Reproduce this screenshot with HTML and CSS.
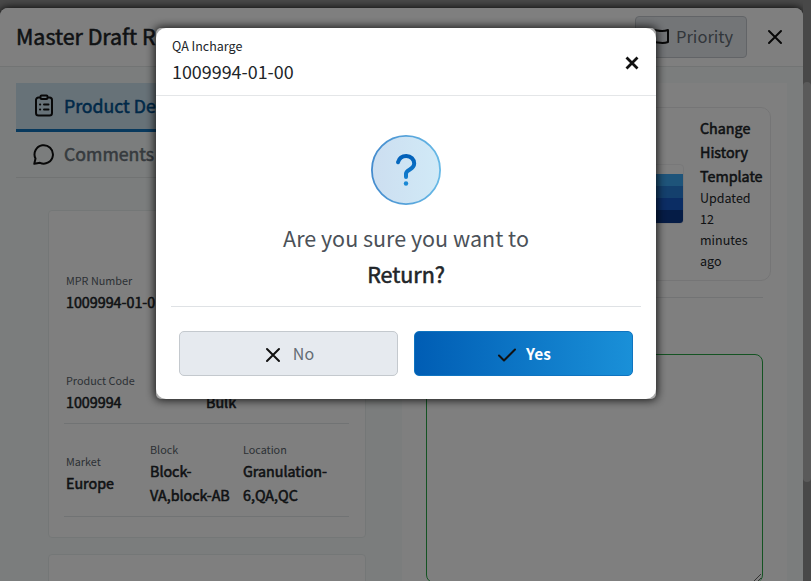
FILE: index.html
```html
<!DOCTYPE html>
<html lang="en">
<head>
<meta charset="utf-8">
<title>Master Draft</title>
<link rel="stylesheet" href="styles.css">
</head>
<body>
<div class="window">
  <header class="window-head">
    <h1 class="title strong">Master Draft R</h1>
    <div class="head-actions">
      <button class="priority"><svg width="20" height="20" viewBox="0 0 20 20"><path d="M2 18V4c4-3 8 2 17-1v12c-8 3-13-2-17 1"/></svg><span>Priority</span></button>
      <svg class="close" width="16" height="16" viewBox="0 0 16 16"><path d="M2 2l12 12M14 2l-12 12"/></svg>
    </div>
  </header>
  <main class="content">
    <section class="left">
      <nav class="tabs">
        <a class="tab active strong"><svg width="22" height="24" viewBox="0 0 22 24"><path d="M7 4.500H5.500a2.500 2.500 0 0 0-2.500 2.500V20a2.500 2.500 0 0 0 2.500 2.500h11a2.500 2.500 0 0 0 2.500-2.500V7a2.500 2.500 0 0 0-2.500-2.500H15M8.500 2.500h5a1 1 0 0 1 1 1v1.500a1 1 0 0 1-1 1h-5a1 1 0 0 1-1-1v-1.500a1 1 0 0 1 1-1zM7 11.500h.2M11 11.500h4.500M7 16.500h.2M11 16.500h4.500"/></svg>Product De</a>
        <a class="tab strong"><svg width="22" height="22" viewBox="0 0 22 22"><path d="M2.500 15.500A9.200 9.200 0 1 1 7 19.800L1.300 20.800z"/></svg>Comments</a>
      </nav>
      <div class="cards">
        <article class="card">
          <div class="row first"><div class="field"><span>MPR Number</span><b class="strong">1009994-01-0</b></div></div>
          <div class="row second"><div class="field wide"><span>Product Code</span><b class="strong">1009994</b></div><div class="field"><span>Type</span><b class="strong">Bulk</b></div></div>
          <div class="row third">
            <div class="field market"><span>Market</span><b class="strong">Europe</b></div>
            <div class="field block"><span>Block</span><b class="strong">Block-<br>VA,block-AB</b></div>
            <div class="field"><span>Location</span><b class="strong">Granulation-<br>6,QA,QC</b></div>
          </div>
        </article>
        <article class="card next"></article>
      </div>
    </section>
    <section class="right">
      <div class="template">
        <div class="thumb"><i></i><i></i><i></i><i></i></div>
        <div class="template-text"><b class="strong">Change<br>History<br>Template</b><span>Updated<br>12<br>minutes<br>ago</span></div>
      </div>
      <hr>
      <textarea></textarea>
    </section>
  </main>
</div>
<div class="scrollbar"><div class="scroll-thumb"></div></div>
<div class="overlay">
  <div class="modal-frame">
    <div class="modal">
      <header class="modal-head">
        <div><div class="role">QA Incharge</div><div class="number">1009994-01-00</div></div>
        <svg class="modal-close" width="14" height="14" viewBox="0 0 14 14"><path d="M1.500 1.500l11 11M12.500 1.500l-11 11"/></svg>
      </header>
      <div class="question">
        <svg class="badge" width="70" height="70" viewBox="0 0 70 70">
          <defs>
            <linearGradient id="fill" x1="0" x2="1"><stop stop-color="#ccdef0"/><stop offset="1" stop-color="#d1eaf7"/></linearGradient>
            <linearGradient id="edge" x1="0" x2="1"><stop stop-color="#458cce"/><stop offset="1" stop-color="#67b9e6"/></linearGradient>
            <linearGradient id="mark" gradientUnits="userSpaceOnUse" x1="0" x2="0" y1="20" y2="50"><stop stop-color="#015fb8"/><stop offset="1" stop-color="#1988d5"/></linearGradient>
          </defs>
          <circle cx="35" cy="35" r="34.100" fill="url(#fill)" stroke="url(#edge)" stroke-width="1.800"/>
          <path d="M27 27.300C28.200 22.900 31.500 21 35.300 21C40 21 43.200 24.400 43.200 28.500C43.200 34.600 35 34.600 35 38.700V42" fill="none" stroke="url(#mark)" stroke-width="4" stroke-linecap="round"/>
          <circle cx="35" cy="48.500" r="2.200" fill="#1988d5" stroke="none"/>
        </svg>
        <p>Are you sure you want to<br><b class="strong">Return?</b></p>
      </div>
      <div class="buttons">
        <button class="no"><svg width="16" height="16" viewBox="0 0 16 16"><path d="M2 2l12 12M14 2l-12 12"/></svg><span>No</span></button>
        <button class="yes"><svg width="20" height="16" viewBox="0 0 20 16"><path d="M2 8.500l5 5L18 2.500"/></svg><span>Yes</span></button>
      </div>
    </div>
  </div>
</div>
</body>
</html>
```

FILE: styles.css
```css
* { box-sizing: border-box; }
html, body { height: 100%; margin: 0; overflow: hidden; }
body {
  display: flex;
  background: #929292;
  color: #212529;
  font-family: "Noto Sans CJK JP", sans-serif;
  font-size: 14.3px;
  line-height: 24px;
}
button { font: inherit; cursor: pointer; }
svg { flex: none; fill: none; stroke: #111; stroke-width: 2; stroke-linecap: round; stroke-linejoin: round; }
.strong { font-weight: 400; -webkit-text-stroke: .55px currentColor; }
.window {
  width: 803px;
  height: 573px;
  margin-top: 8px;
  border-radius: 8px 8px 0 0;
  background: #f7fbfa;
  box-shadow: 0 0 8px #000;
  overflow: hidden;
}
.window-head {
  display: flex;
  align-items: center;
  justify-content: space-between;
  height: 59px;
  padding: 0 20px 0 16px;
  background: #fff;
  border-bottom: 1px solid #e4e8e8;
}
.title { margin: 0; padding-bottom: 2px; font-size: 21.400px; line-height: 32px; white-space: nowrap; }
.head-actions { display: flex; align-items: center; gap: 20px; }
.priority {
  display: flex;
  align-items: center;
  gap: 7px;
  width: 112px;
  height: 42px;
  padding: 0 0 0 13px;
  border: 1px solid #c4c9ce;
  border-radius: 4px;
  background: #e6eaef;
  color: #656d75;
  font-size: 16.500px;
}
.priority span { padding-bottom: 2px; }
.content { display: flex; height: 514px; padding: 16px 16px 0; }
.left { width: 386px; }
.tab {
  display: flex;
  align-items: center;
  gap: 9px;
  height: 49px;
  padding: 0 0 2px 17px;
  border-bottom: 3px solid #1172bb;
  background: #cfe4f1;
  color: #015291;
  font-size: 17.700px;
}
.tab + .tab { height: 46px; padding-bottom: 3px; border-bottom: 1px solid #e2e6e6; background: none; color: #6c757d; }
.tab + .tab svg { margin-top: 2px; }
.cards { padding: 32px 36px 0 32px; }
.card { height: 328px; padding: 59px 16px 0 17px; background: #fff; border: 1px solid #e9efee; border-radius: 4px; }
.card.next { margin-top: 16px; }
.field { display: flex; flex-direction: column; white-space: nowrap; }
.field span { color: #59636b; font-size: 10.800px; line-height: 20px; }
.row { display: flex; margin-left: -2px; padding-left: 2px; }
.first { height: 100px; }
.second { height: 54px; border-bottom: 1px solid #e3e6e8; }
.wide { width: 140px; }
.third { align-items: center; height: 93px; padding-top: 5px; border-bottom: 1px solid #e3e6e8; }
.market { width: 84px; }
.block { width: 93px; }
.right { flex: 1; padding: 24px 16px 0 24px; background: #fff; }
.template {
  display: flex;
  justify-content: flex-end;
  align-items: center;
  gap: 16px;
  height: 174px;
  padding-right: 8px;
  border: 1px solid #eaeaec;
  border-radius: 10px;
}
.thumb { width: 60px; height: 60px; padding-top: 9px; border: 1px solid #f0f1f2; border-radius: 4px; background: #fff; overflow: hidden; }
.thumb i { display: block; height: 12px; background: #3da8f5; }
.thumb i:nth-child(2) { background: #2880db; }
.thumb i:nth-child(3) { background: #175ac9; }
.thumb i:nth-child(4) { height: 13px; background: #0b388d; }
.template-text { display: flex; flex-direction: column; width: 62px; padding-bottom: 2px; white-space: nowrap; }
.template-text span { margin-top: -1px; font-size: 12.500px; line-height: 21px; }
.right hr { width: 337px; height: 1px; margin: 16px 0 56px; border: 0; background: #e5e7e9; }
.right textarea { display: block; width: 337px; height: 229px; border: 1px solid #28a745; border-radius: 8px; background: #fff; }
.scrollbar { flex: 1; padding-top: 82px; background: #909090; }
.scroll-thumb { height: 400px; border-radius: 4px; background: #b4b4b4; }
.overlay { position: fixed; inset: 0; display: flex; justify-content: center; align-items: flex-start; padding: 28px 0 0 1px; background: rgba(0, 0, 0, .5); }
.modal-frame { width: 500px; height: 371px; border-radius: 5px; background: #aaa; box-shadow: 0 0 10px 1px rgba(0, 0, 0, .85); }
.modal { height: 371px; border-radius: 10px; background: #fff; }
.modal-head { display: flex; align-items: flex-start; justify-content: space-between; height: 68px; padding: 7px 17px 0 16px; border-bottom: 1px solid #e4e6e8; }
.role { font-size: 12.500px; line-height: 22px; }
.number { margin-top: -1px; font-size: 17.900px; line-height: 30px; }
.modal-close { margin-top: 21px; stroke-width: 2.800; stroke-linecap: butt; }
.question { display: flex; flex-direction: column; align-items: center; height: 211px; margin: 0 15px; padding-top: 39px; border-bottom: 1px solid #dfe2e5; }
.question p { margin: 15px 0 0; color: #4b5158; font-size: 21.500px; line-height: 36px; text-align: center; }
.question b { color: #212529; }
.buttons { display: flex; gap: 16px; padding: 24px 23px 0; }
.buttons button { display: flex; flex: none; width: 219px; align-items: center; justify-content: center; gap: 12px; height: 45px; padding: 0; border-radius: 5px; font-size: 16px; }
.buttons span { padding-bottom: 2px; }
.buttons svg { position: relative; top: 1px; }
.buttons .no { padding-left: 2px; border: 1px solid #c4c9ce; background: #e6eaef; color: #656d75; }
.buttons .yes { gap: 9px; padding-left: 1px; border: 1px solid #0f74c0; background: linear-gradient(90deg, #005db4, #1a90d8); color: #fff; font-weight: 700; }
.yes span { font-size: 15.500px; }
```
